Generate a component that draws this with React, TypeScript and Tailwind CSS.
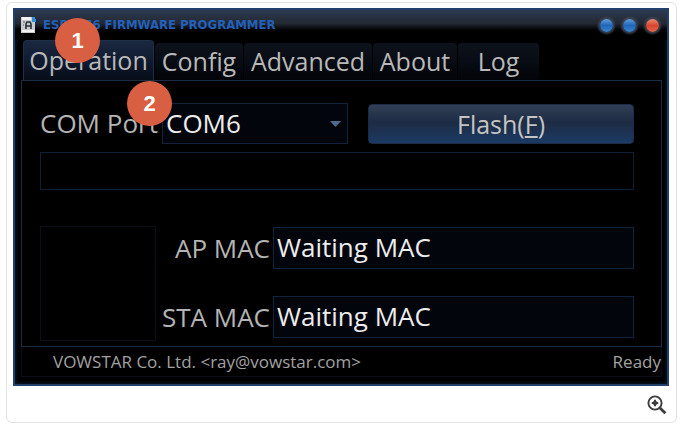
import { useState } from "react";
import clsx from "clsx";

const tabs = [
  { name: "Operation", width: "w-[131px]" },
  { name: "Config", width: "w-[88px]" },
  { name: "Advanced", width: "w-32" },
  { name: "About", width: "w-[84px]" },
  { name: "Log", width: "w-[81px]" },
];

const macFields = [
  { id: "ap-mac", label: "AP MAC" },
  { id: "sta-mac", label: "STA MAC" },
];

function AppIcon() {
  return (
    <svg width="16" height="18" viewBox="0 0 16 18" aria-hidden="true">
      <path d="M0 1h11l3 4v12H0z" fill="#c9cccf" />
      <path d="M1 1h9v3H1zM1 14h12v2H1z" fill="#f2f2f2" />
      <path d="M11 1h3v2h1v3h-4z" fill="#2f8fe0" />
      <path d="M5 13V8l1-2h3l1 2v5M5 10h5" fill="none" stroke="#2a2e33" strokeWidth="1.6" />
      <path d="M2 6h2M2 9h1" stroke="#5b6066" />
    </svg>
  );
}

function ZoomIcon() {
  return (
    <svg width="20" height="20" viewBox="0 0 20 20" fill="none" aria-hidden="true">
      <circle cx="8" cy="8" r="6.6" stroke="#3d3d3d" strokeWidth="1.9" />
      <path d="M13 13l5.4 5.2" stroke="#3d3d3d" strokeWidth="2.8" />
      <path d="M8 4.8v6.4M4.8 8h6.4" stroke="#3d3d3d" strokeWidth="2" />
      <circle cx="8" cy="8" r="2.2" fill="#3d3d3d" />
    </svg>
  );
}

function WindowButton({ label, danger }: { label: string; danger?: boolean }) {
  return (
    <button
      aria-label={label}
      className={clsx(
        "size-[13px] rounded-full shadow-[0_0_2px_2px_#3c4350]",
        danger
          ? "bg-linear-to-b from-[#ea8a74] via-[#d8442e] to-[#e2654e]"
          : "bg-linear-to-b from-[#5f9ddc] via-[#1f66b8] to-[#3a86d2]"
      )}
    />
  );
}

function Badge({ children, className }: { children: string; className: string }) {
  return (
    <span
      className={clsx(
        "absolute z-10 flex size-[45px] items-center justify-center rounded-full bg-[#d95f43] font-['Liberation_Sans'] text-[22px] font-bold text-white",
        className
      )}
    >
      {children}
    </span>
  );
}

export default function App() {
  const [active, setActive] = useState("Operation");
  const [port, setPort] = useState("COM6");

  return (
    <main className="bg-white pt-0.5 pr-[3px] pb-1 pl-1.5 font-['Open_Sans',sans-serif]">
      <div className="rounded-md border border-[#e2e2e4] pt-[5px] pr-[7px] pl-1.5">
        <section className="relative border-2 border-[#213f6a] bg-black pr-[5px] pb-[7px] pl-1.5 shadow-[inset_0_0_4px_#0d2440]">
          <header className="-mr-[5px] -ml-1.5 flex h-[30px] items-center bg-linear-to-b from-[#2b3a52] from-0% via-[#232832] via-45% to-black to-80% pr-2 pl-1.5">
            <AppIcon />
            <h1 className="ml-1.5 font-['DejaVu_Sans_Condensed','DejaVu_Sans',sans-serif] text-[13px] font-bold whitespace-nowrap text-[#2360ba]">
              ESP8266 FIRMWARE PROGRAMMER
            </h1>
            <div className="ml-auto flex gap-2.5">
              <WindowButton label="Minimize" />
              <WindowButton label="Maximize" />
              <WindowButton label="Close" danger />
            </div>
          </header>

          <div role="tablist" className="flex h-10 items-end gap-px pl-0.5">
            {tabs.map((tab) => (
              <button
                key={tab.name}
                role="tab"
                aria-selected={active === tab.name}
                onClick={() => setActive(tab.name)}
                className={clsx(
                  "rounded-t-sm pb-0.5 text-[25px] leading-8 text-[#b9b9b9]",
                  tab.width,
                  active === tab.name
                    ? "h-10 border border-b-0 border-[#1d2f4a] bg-linear-to-b from-[#1a2840] via-[#101b30] via-50% to-[#070d18]"
                    : "h-[37px] bg-linear-to-b from-[#0d121c] via-[#080c14] via-50% to-[#020408]"
                )}
              >
                {tab.name}
              </button>
            ))}
          </div>

          <div role="tabpanel" className="border border-[#1d2c42] pt-[22px] pr-[27px] pb-[5px] pl-[18px]">
            <div className="flex h-[41px] items-center">
              <label htmlFor="port" className="w-[122px] text-[26px] whitespace-nowrap text-[#b4b4b4]">
                COM Port
              </label>
              <div className="relative h-full w-[186px]">
                <select
                  id="port"
                  value={port}
                  onChange={(e) => setPort(e.target.value)}
                  className="size-full appearance-none border border-[#12243c] bg-[#03050d] pb-0.5 pl-[3px] text-[26px] text-[#ededed]"
                >
                  <option>COM6</option>
                </select>
                <svg
                  className="pointer-events-none absolute top-[18px] right-[7px]"
                  width="11"
                  height="6"
                  viewBox="0 0 11 6"
                  aria-hidden="true"
                >
                  <path d="M0 0h11L5.5 6z" fill="#4d6b8e" />
                </svg>
              </div>
              <button className="ml-5 h-10 flex-1 rounded-sm border border-[#1c2c48] bg-linear-to-b from-[#313f56] via-[#1d2c44] via-45% to-[#1b3a64] text-[25px] leading-8 text-[#c4c4c4]">
                Flash(<u className="decoration-2 underline-offset-2">F</u>)
              </button>
            </div>

            <div role="progressbar" aria-label="Progress" aria-valuenow={0} className="mt-2 h-[38px] border border-[#101f33]" />

            <div className="mt-9 flex">
              <div className="h-[115px] w-[116px] border border-[#0a0f18]" />
              <div className="flex flex-1 flex-col gap-[27px] pt-px">
                {macFields.map((field) => (
                  <div key={field.id} className="flex h-[42px] items-center">
                    <label htmlFor={field.id} className="w-[117px] pr-[3px] text-right text-[26px] whitespace-nowrap text-[#b4b4b4]">
                      {field.label}
                    </label>
                    <input
                      id={field.id}
                      readOnly
                      value="Waiting MAC"
                      className="h-full min-w-0 flex-1 border border-[#12243c] bg-[#03050d] pb-0.5 pl-[3px] text-[26px] text-[#ededed]"
                    />
                  </div>
                ))}
              </div>
            </div>
          </div>

          <footer className="flex h-[30px] items-center justify-between border border-t-0 border-[#080f1a] pl-[31px] text-[17px] text-[#a2a2a2]">
            <span>VOWSTAR Co. Ltd. &lt;ray@vowstar.com&gt;</span>
            <span>Ready</span>
          </footer>

          <Badge className="top-2 left-10">1</Badge>
          <Badge className="top-[71px] left-[112px]">2</Badge>
        </section>

        <div className="flex h-9 items-center justify-end pt-0.5 pr-0.5">
          <button aria-label="Enlarge">
            <ZoomIcon />
          </button>
        </div>
      </div>
    </main>
  );
}
